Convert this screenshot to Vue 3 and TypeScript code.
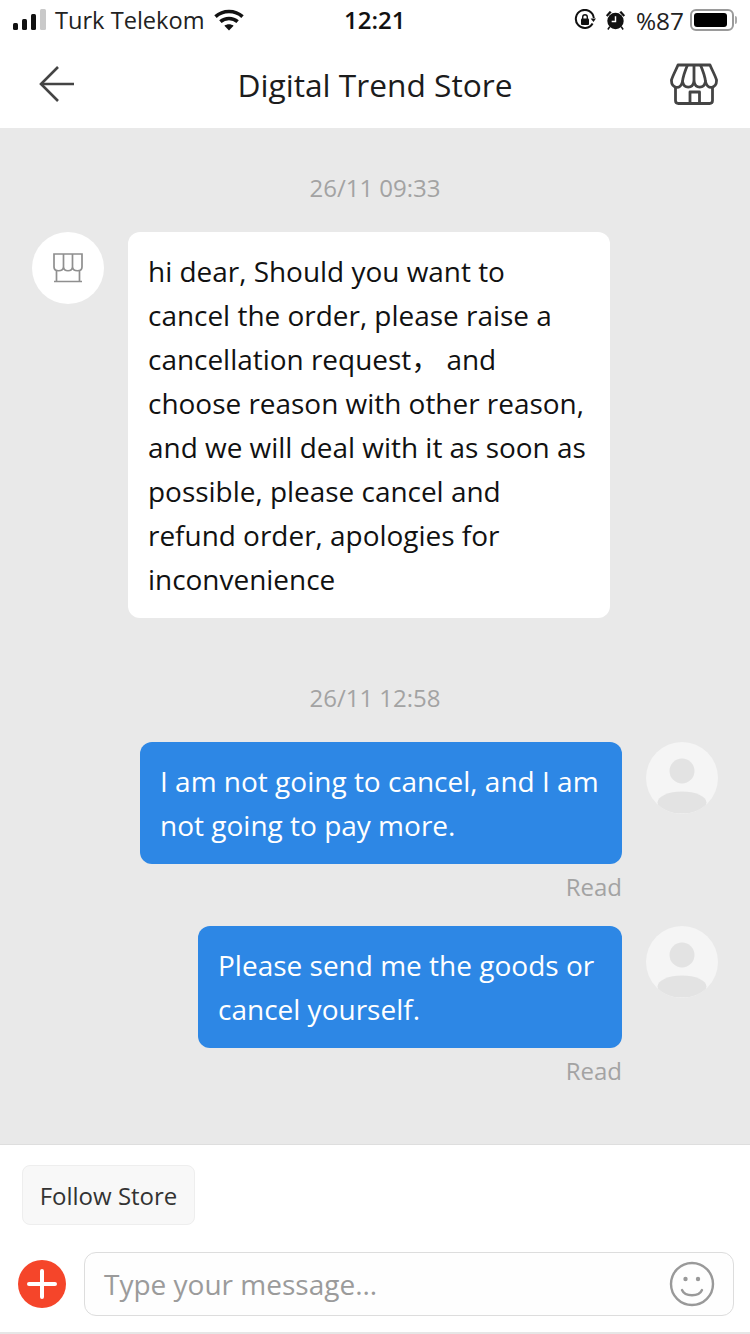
<template>
  <div class="page">
    <div class="status-bar">
      <div class="status-left">
        <svg class="signal" width="34" height="22" viewBox="0 0 34 22">
          <rect x="0" y="14" width="5" height="7" rx="1.5" fill="#111" />
          <rect x="9" y="10" width="5" height="11" rx="1.5" fill="#111" />
          <rect x="18" y="5" width="5" height="16" rx="1.5" fill="#111" />
          <rect x="27" y="0" width="6" height="21" rx="1.5" fill="#c9c9c9" />
        </svg>
        <span class="carrier">Turk Telekom</span>
        <svg width="30" height="22" viewBox="0 0 30 22" fill="none" stroke="#111" stroke-width="3.6">
          <path d="M1.5 7.6C9 0.8 21 0.8 28.5 7.6" />
          <path d="M6.4 12.6C11.2 8.4 18.8 8.4 23.6 12.6" />
          <path d="M15 21.5L10.4 16.8C13 14.8 17 14.8 19.6 16.8Z" fill="#111" stroke="none" />
        </svg>
      </div>
      <span class="clock">12:21</span>
      <div class="status-right">
        <svg width="22" height="22" viewBox="0 0 22 22" fill="none">
          <path d="M18.6 14.5A9 9 0 1 1 19.8 9" stroke="#111" stroke-width="2" />
          <path d="M16.6 9.5H22L19.5 13Z" fill="#111" />
          <rect x="7" y="9.5" width="8" height="6.5" rx="1" fill="#111" />
          <path d="M8.7 10V8a2.3 2.3 0 0 1 4.6 0v2" stroke="#111" stroke-width="1.4" />
        </svg>
        <svg class="alarm" width="21" height="22" viewBox="0 0 22 22" fill="none">
          <circle cx="11" cy="12" r="8.6" fill="#111" />
          <path d="M11 7v5.5H7" stroke="#fff" stroke-width="1.5" />
          <path d="M1 6l4-4.4L7 3 2.6 7.6ZM21 6l-4-4.4L15 3l4.4 4.6Z" fill="#111" />
          <path d="M5 18l-2 3M17 18l2 3" stroke="#111" stroke-width="1.6" />
        </svg>
        <span class="battery-text">%87</span>
        <div class="battery"><div class="battery-level" /></div>
        <div class="battery-tip" />
      </div>
    </div>

    <header class="nav">
      <svg class="back" width="36" height="36" viewBox="0 0 36 36" fill="none" stroke="#444" stroke-width="2.6">
        <path d="M35 18H2" />
        <path d="M19 1L2 18l17 17" />
      </svg>
      <h1 class="title">Digital Trend Store</h1>
      <svg class="store" width="48" height="42" viewBox="0 0 48 42" fill="none" stroke="#444" stroke-width="2.8" stroke-linejoin="round">
        <path d="M8 2H40C42 7 45 12 46.500 17C47 26 37 27 35.500 18.500C34 26 25.500 26 24 18.500C22.500 26 14 26 12.500 18.500C11 27 1 26 1.500 17C3 12 6 7 8 2Z" />
        <path d="M17.500 2C15 8 13 13 12.500 18.500M24 2V18.500M30.500 2C33 8 35 13 35.500 18.500" />
        <path d="M5.500 24V37.500Q5.500 40.500 8.500 40.500H39.500Q42.500 40.500 42.500 37.500V24" />
        <path d="M20 40.500V29H29.500V40.500" />
      </svg>
    </header>

    <main class="chat">
      <div class="time first">26/11 09:33</div>
      <div class="msg">
        <div class="avatar shop">
          <svg width="30" height="30" viewBox="0 0 30 30" fill="none" stroke="#8f8f8f" stroke-width="1.700">
            <path d="M1 1H29V14C29 19 20 19 19.500 14C19 19 11 19 10.500 14C10 19 1 19 1 14Z" />
            <path d="M10.500 1V14M19.500 1V14" />
            <path d="M3.500 17V28.500M26.500 17V28.500M1 28.500H29" />
          </svg>
        </div>
        <div class="bubble in">hi dear, Should you want to<br />cancel the order, please raise a<br />cancellation request，&nbsp;and<br />choose reason with other reason,<br />and we will deal with it as soon as<br />possible, please cancel and<br />refund order, apologies for<br />inconvenience</div>
      </div>

      <div class="time second">26/11 12:58</div>
      <div class="msg out">
        <div class="out-body">
          <div class="bubble sent">I am not going to cancel, and I am<br />not going to pay more.</div>
          <div class="read">Read</div>
        </div>
        <div class="avatar user">
          <svg width="72" height="72" viewBox="0 0 72 72">
            <circle cx="36" cy="29" r="12.500" fill="#e3e3e3" />
            <ellipse cx="36" cy="60.500" rx="24.500" ry="11" fill="#e3e3e3" />
          </svg>
        </div>
      </div>
      <div class="msg out next">
        <div class="out-body">
          <div class="bubble sent narrow">Please send me the goods or<br />cancel yourself.</div>
          <div class="read">Read</div>
        </div>
        <div class="avatar user">
          <svg width="72" height="72" viewBox="0 0 72 72">
            <circle cx="36" cy="29" r="12.500" fill="#e3e3e3" />
            <ellipse cx="36" cy="60.500" rx="24.500" ry="11" fill="#e3e3e3" />
          </svg>
        </div>
      </div>
    </main>

    <footer class="footer">
      <button class="follow">Follow Store</button>
      <div class="composer">
        <svg class="plus" width="48" height="48" viewBox="0 0 48 48">
          <circle cx="24" cy="24" r="24" fill="#f5452a" />
          <path d="M24 11V37M11 24H37" stroke="#fff" stroke-width="4" stroke-linecap="round" />
        </svg>
        <div class="input">
          <span class="placeholder">Type your message...</span>
          <svg width="46" height="46" viewBox="0 0 46 46" fill="none" stroke="#999" stroke-width="2.400">
            <circle cx="23" cy="23" r="21" />
            <path d="M13 29C16 36 30 36 33 29" stroke-linecap="round" />
            <circle cx="16.500" cy="18" r="2.200" fill="#999" stroke="none" />
            <circle cx="29" cy="18" r="2.200" fill="#999" stroke="none" />
          </svg>
        </div>
      </div>
    </footer>
  </div>
</template>

<script setup lang="ts">
</script>

<style>
body {
  margin: 0;
  background: #fff;
}
</style>

<style scoped>
.page {
  width: 750px;
  height: 1334px;
  display: flex;
  flex-direction: column;
  font-family: "Open Sans", "Noto Sans CJK SC", "Liberation Sans", sans-serif;
  color: #222;
  overflow: hidden;
}

.status-bar {
  height: 44px;
  flex: none;
  padding: 0 13px 4px;
  display: flex;
  align-items: center;
  justify-content: space-between;
  position: relative;
  box-sizing: border-box;
}

.status-left {
  display: flex;
  align-items: center;
}

.signal {
  margin-right: 8px;
}

.carrier {
  font-size: 23.6px;
  margin-right: 9px;
  color: #222;
}

.clock {
  position: absolute;
  left: 344px;
  top: 3px;
  font-size: 24px;
  font-weight: 600;
  line-height: 34px;
  color: #111;
}

.status-right {
  display: flex;
  align-items: center;
}

.alarm {
  margin-left: 9px;
}

.battery-text {
  font-size: 24.4px;
  margin-left: 10px;
  color: #222;
}

.battery {
  width: 44px;
  height: 22px;
  margin-left: 6px;
  border: 2px solid #9a9a9a;
  border-radius: 6px;
  box-sizing: border-box;
  padding: 2px;
}

.battery-level {
  width: 33px;
  height: 14px;
  background: #000;
  border-radius: 3px;
}

.battery-tip {
  width: 2px;
  height: 8px;
  margin-left: 1px;
  background: #aaa;
  border-radius: 0 2px 2px 0;
}

.nav {
  height: 84px;
  flex: none;
  display: flex;
  align-items: center;
  justify-content: space-between;
  padding: 0 32px 4px 39px;
  position: relative;
  box-sizing: border-box;
}

.title {
  position: absolute;
  left: 0;
  right: 0;
  top: 19px;
  margin: 0;
  text-align: center;
  font-size: 31.7px;
  line-height: 44px;
  font-weight: 400;
  color: #1c1c1c;
}

.chat {
  flex: 1;
  background: #e9e9e9;
  border-bottom: 1px solid #dedede;
  padding: 0 32px;
}

.time {
  text-align: center;
  font-size: 24px;
  line-height: 34px;
  color: #a3a3a3;
}

.first {
  margin-top: 43px;
  margin-bottom: 27px;
}

.second {
  margin-top: 63px;
  margin-bottom: 27px;
}

.msg {
  display: flex;
  align-items: flex-start;
}

.out {
  justify-content: flex-end;
}

.next {
  margin-top: 22px;
}

.out-body {
  display: flex;
  flex-direction: column;
  align-items: flex-end;
}

.avatar {
  width: 72px;
  height: 72px;
  flex: none;
  border-radius: 50%;
  background: #fff;
  display: flex;
  align-items: center;
  justify-content: center;
  overflow: hidden;
}

.user {
  background: #f5f5f5;
  margin-left: 24px;
}

.bubble {
  font-size: 28px;
  line-height: 44px;
  padding: 17px 20px;
  border-radius: 12px;
  white-space: nowrap;
  box-sizing: border-box;
}

.in {
  width: 482px;
  margin-left: 24px;
  background: #fff;
  color: #111;
  font-size: 27.95px;
}

.sent {
  width: 482px;
  background: #2d87e5;
  color: #fff;
}

.narrow {
  width: 424px;
}

.read {
  font-size: 24px;
  line-height: 34px;
  margin-top: 6px;
  color: #a3a3a3;
}

.footer {
  height: 189px;
  flex: none;
  background: #fff;
  border-bottom: 2px solid #e6e6e6;
  box-sizing: border-box;
  padding: 20px 16px 0 18px;
}

.follow {
  display: block;
  width: 173px;
  height: 60px;
  margin-left: 4px;
  padding: 0;
  background: #f8f8f8;
  border: 1px solid #eee;
  border-radius: 8px;
  font-family: inherit;
  font-size: 24px;
  color: #333;
}

.composer {
  display: flex;
  align-items: center;
  margin-top: 27px;
}

.plus {
  flex: none;
}

.input {
  flex: 1;
  height: 64px;
  margin-left: 18px;
  border: 1px solid #ddd;
  border-radius: 12px;
  box-sizing: border-box;
  background: #fefefe;
  padding: 0 18px 0 19px;
  display: flex;
  align-items: center;
  justify-content: space-between;
}

.placeholder {
  font-size: 28px;
  color: #9b9b9b;
}
</style>
